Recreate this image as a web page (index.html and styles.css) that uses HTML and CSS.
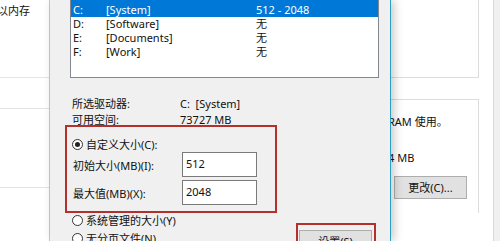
FILE: index.html
```html
<!DOCTYPE html>
<html>
    <head>
        <title>虚拟内存</title>
        <link rel="stylesheet" href="styles.css">
    </head>
    <body>
        <div class='screen'>
            <div class='backLeft'>
                <div class='backRow rowTop'><span class='backText'>以内存</span></div>
                <div class='backRow rowMid'></div>
                <div class='backRow rowLow'></div>
            </div>
            <div class='dialog'>
                <div class='driveList'>
                    <div class='driveRow selected'>
                        <span class='dLetter'>C:</span>
                        <span class='dLabel'>[System]</span>
                        <span class='dSize'>512 - 2048</span>
                    </div>
                    <div class='driveRow'>
                        <span class='dLetter'>D:</span>
                        <span class='dLabel'>[Software]</span>
                        <span class='dSize'>无</span>
                    </div>
                    <div class='driveRow'>
                        <span class='dLetter'>E:</span>
                        <span class='dLabel'>[Documents]</span>
                        <span class='dSize'>无</span>
                    </div>
                    <div class='driveRow'>
                        <span class='dLetter'>F:</span>
                        <span class='dLabel'>[Work]</span>
                        <span class='dSize'>无</span>
                    </div>
                </div>
                <div class='driveInfo'>
                    <span>所选驱动器:</span><span>C:&nbsp;&nbsp;[System]</span>
                    <span>可用空间:</span><span>73727 MB</span>
                </div>
                <div class='markBox customBox'>
                    <div class='radioRow'><span class='radio checked'></span>自定义大小(C):</div>
                    <div class='fieldRow'>
                        <span class='fieldLabel'>初始大小(MB)(I):</span>
                        <div class='field'>512</div>
                    </div>
                    <div class='fieldRow second'>
                        <span class='fieldLabel'>最大值(MB)(X):</span>
                        <div class='field'>2048</div>
                    </div>
                </div>
                <div class='bottomRow'>
                    <div class='radioCol'>
                        <div class='radioRow'><span class='radio'></span>系统管理的大小(Y)</div>
                        <div class='radioRow'><span class='radio'></span>无分页文件(N)</div>
                    </div>
                    <div class='markBox setBox'>
                        <div class='btn setBtn'>设置(S)</div>
                    </div>
                </div>
            </div>
            <div class='backRight'>
                <div class='tabPage'>
                    <div class='group groupTop'></div>
                    <div class='group groupMem'>
                        <div class='memText'>RAM 使用。</div>
                        <div class='memText memSize'>4 MB</div>
                        <div class='btn changeBtn'>更改(C)...</div>
                    </div>
                </div>
            </div>
        </div>
    </body>
</html>
```

FILE: styles.css
```css
html, body {
    margin: 0;
    width: 100%;
    height: 100%;
}
body {
    font-family: "Noto Sans", "Noto Sans CJK SC", sans-serif;
    font-size: 11px;
    color: #111;
    background-color: #f0f0f0;
}
.screen {
    display: flex;
    width: 500px;
    height: 241px;
    overflow: hidden;
}
.backLeft {
    flex: 0 0 49px;
    background-color: #fff;
    border-right: 1px solid #b9d3da;
    overflow: hidden;
}
.backRow {
    border-bottom: 1px solid #e4e4e4;
    box-sizing: border-box;
}
.rowTop {
    height: 78px;
    padding-top: 3px;
    line-height: 16px;
}
.rowMid {
    height: 31px;
}
.rowLow {
    height: 79px;
}
.backText {
    display: block;
    margin-left: -3px;
    white-space: nowrap;
}
.dialog {
    position: relative;
    z-index: 1;
    flex: 0 0 341px;
    box-sizing: border-box;
    padding-left: 20px;
    background-color: #f0f0f0;
    border-right: 1px solid #2b9fc0;
    box-shadow: 3px 0 9px rgba(0, 0, 0, 0.22);
}
.driveList {
    margin-top: -1px;
    width: 309px;
    height: 79px;
    box-sizing: border-box;
    border: 1px solid #828790;
    background-color: #fff;
}
.driveRow {
    display: flex;
    line-height: 14px;
    padding-left: 2px;
    white-space: nowrap;
}
.driveRow.selected {
    padding-top: 3px;
    background-color: #0078d7;
    color: #fff;
}
.dLetter {
    flex: 0 0 33px;
}
.dLabel {
    flex: 0 0 150px;
}
.driveInfo {
    display: grid;
    grid-template-columns: 108px auto;
    margin-top: 18px;
    padding-left: 2px;
    line-height: 16px;
}
.markBox {
    border: 2px solid #b3312c;
    box-sizing: border-box;
}
.customBox {
    margin-top: -3px;
    margin-left: -5px;
    width: 212px;
    height: 88px;
    padding: 9px 0 0 5px;
}
.radioRow {
    display: flex;
    align-items: center;
    height: 16px;
    gap: 3px;
    white-space: nowrap;
}
.radio {
    width: 11px;
    height: 11px;
    box-sizing: border-box;
    border: 1px solid #333;
    border-radius: 50%;
    background-color: #fff;
    display: flex;
    align-items: center;
    justify-content: center;
}
.radio.checked::after {
    content: '';
    width: 5px;
    height: 5px;
    border-radius: 50%;
    background-color: #222;
}
.fieldRow {
    display: flex;
    align-items: center;
    height: 25px;
}
.fieldRow.second {
    margin-top: 3px;
}
.fieldLabel {
    flex: 0 0 109px;
    margin-left: 1px;
    white-space: nowrap;
}
.field {
    width: 75px;
    height: 25px;
    box-sizing: border-box;
    border: 1px solid #7a7a7a;
    background-color: #fff;
    padding: 3px 0 0 3px;
    line-height: 16px;
}
.bottomRow {
    display: flex;
}
.radioCol {
    flex: 0 0 226px;
    box-sizing: border-box;
    margin-top: -1px;
    padding-left: 2px;
    display: flex;
    flex-direction: column;
    gap: 2px;
}
.setBox {
    margin-top: 10px;
    width: 80px;
    height: 40px;
    padding: 5px 0 0 1px;
}
.btn {
    width: 73px;
    height: 23px;
    box-sizing: border-box;
    border: 1px solid #adadad;
    background-color: #e1e1e1;
    text-align: center;
    line-height: 21px;
    white-space: nowrap;
}
.backRight {
    flex: 1;
    background-color: #f0f0f0;
    overflow: hidden;
}
.tabPage {
    width: 103px;
    height: 100%;
    box-sizing: border-box;
    background-color: #fff;
    border-right: 1px solid #d9d9d9;
}
.group {
    width: 88px;
    box-sizing: border-box;
    border-right: 1px solid #dcdcdc;
}
.groupTop {
    height: 78px;
    border-bottom: 1px solid #dcdcdc;
}
.groupMem {
    margin-top: 21px;
    height: 114px;
    border-top: 1px solid #dcdcdc;
    padding-top: 14px;
}
.memText {
    line-height: 16px;
    text-indent: -3px;
    white-space: nowrap;
}
.memSize {
    margin-top: 20px;
}
.changeBtn {
    margin-top: 10px;
    margin-left: 3px;
}
```
